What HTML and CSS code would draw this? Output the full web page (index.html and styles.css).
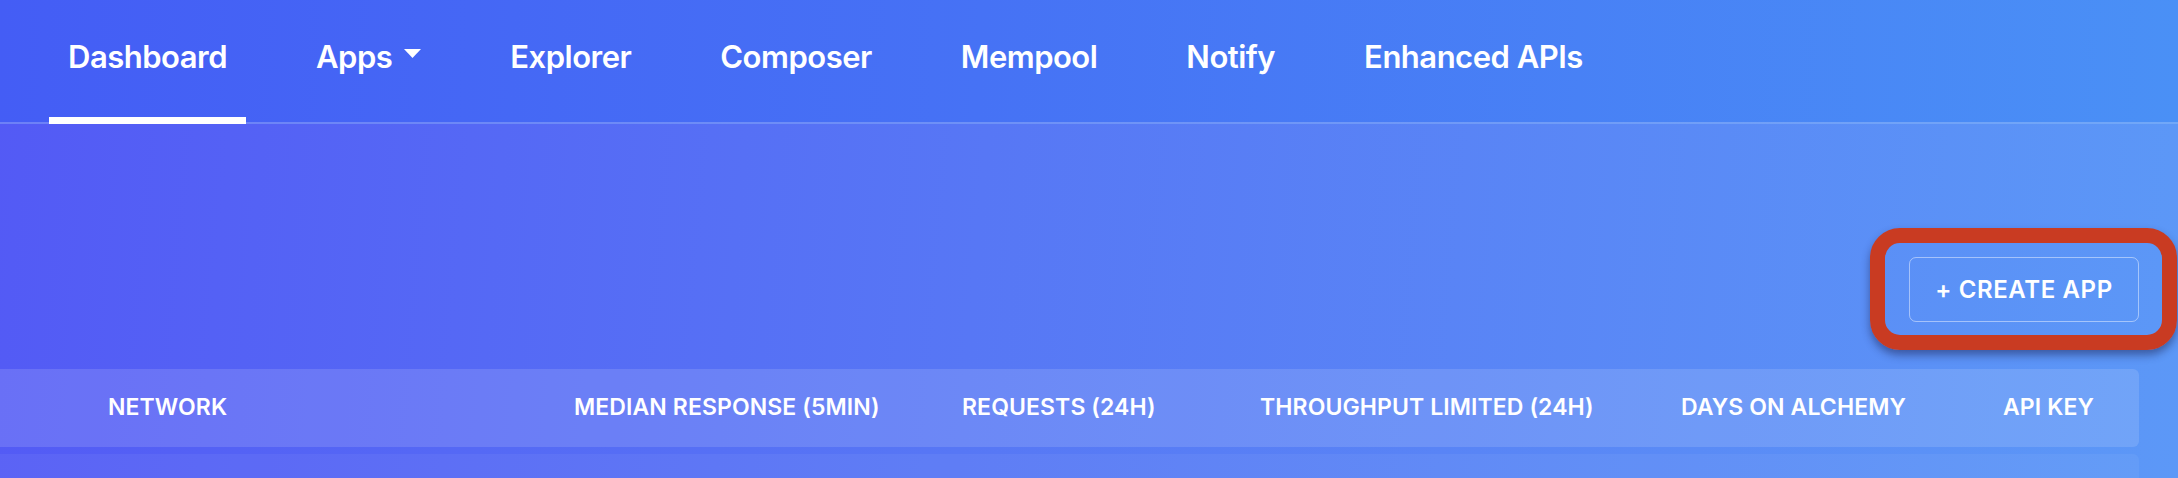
FILE: index.html
```html
<!DOCTYPE html>
<html lang="en">
<head>
<meta charset="utf-8">
<title>Dashboard</title>
<link rel="stylesheet" href="styles.css">
</head>
<body>
<div class="page">
  <nav class="nav">
    <a class="tab active">Dashboard</a>
    <a class="tab">Apps<svg class="caret" width="17" height="9" viewBox="0 0 17 9"><path d="M0 0 H17 L8.5 9 Z" fill="#fff"/></svg></a>
    <a class="tab">Explorer</a>
    <a class="tab">Composer</a>
    <a class="tab">Mempool</a>
    <a class="tab">Notify</a>
    <a class="tab">Enhanced APIs</a>
  </nav>
  <main class="content">
    <div class="toolbar">
      <div class="highlight">
        <button class="create">+ CREATE APP</button>
        <span class="ring"></span>
      </div>
    </div>
    <div class="table">
      <div class="thead">
        <div class="th">NETWORK</div>
        <div class="th">MEDIAN RESPONSE (5MIN)</div>
        <div class="th">REQUESTS (24H)</div>
        <div class="th">THROUGHPUT LIMITED (24H)</div>
        <div class="th">DAYS ON ALCHEMY</div>
        <div class="th">API KEY</div>
      </div>
      <div class="row"></div>
    </div>
  </main>
</div>
</body>
</html>
```
FILE: styles.css
```css
* { box-sizing: border-box; }
html, body { margin: 0; padding: 0; }
body {
  width: 2178px;
  height: 478px;
  overflow: hidden;
  font-family: "Inter", "Liberation Sans", sans-serif;
  color: #fff;
}
.page {
  height: 478px;
  overflow: hidden;
  background: linear-gradient(95deg, #535AF5 0%, #5777F5 45%, #5C98F7 100%);
}
.nav {
  display: flex;
  gap: 51px;
  padding-left: 49px;
  height: 124px;
  border-bottom: 2px solid rgba(255, 255, 255, 0.22);
  background: linear-gradient(92deg, #445DF5 0%, #4672F5 45%, #4A90F6 100%);
}
.tab {
  display: flex;
  align-items: flex-start;
  padding: 41px 19px 0;
  height: 124px;
  margin-bottom: -2px;
  font-size: 31px;
  line-height: 31px;
  font-weight: 600;
  letter-spacing: -0.5px;
  color: #fff;
  white-space: nowrap;
}
.tab.active { border-bottom: 7px solid #fff; }
.caret { margin-left: 12px; margin-top: 8px; }
.content { padding-right: 39px; }
.toolbar {
  display: flex;
  justify-content: flex-end;
  padding-top: 133px;
}
.highlight { position: relative; }
.create {
  display: flex;
  align-items: center;
  justify-content: center;
  width: 230px;
  height: 65px;
  background: transparent;
  border: 1.5px solid rgba(255, 255, 255, 0.45);
  border-radius: 7px;
  color: #fff;
  font-family: "Inter", "Liberation Sans", sans-serif;
  font-size: 24px;
  font-weight: 600;
  letter-spacing: 0.6px;
}
.ring {
  position: absolute;
  left: -39px;
  top: -29px;
  right: -38px;
  bottom: -28px;
  border: 15px solid #C93B22;
  border-radius: 30px;
  box-shadow: 0 5px 8px rgba(20, 20, 60, 0.45);
}
.table { margin-top: 47px; }
.thead {
  display: grid;
  grid-template-columns: 466px 388px 298px 421px 322px auto;
  padding: 27px 0 0 108px;
  height: 78px;
  background: rgba(255, 255, 255, 0.13);
  border-radius: 0 6px 6px 0;
}
.th {
  font-size: 23px;
  line-height: 23px;
  font-weight: 600;
  letter-spacing: 0.1px;
  white-space: nowrap;
}
.row {
  margin-top: 7px;
  height: 24px;
  background: rgba(255, 255, 255, 0.05);
  border-radius: 0 6px 0 0;
}
```
